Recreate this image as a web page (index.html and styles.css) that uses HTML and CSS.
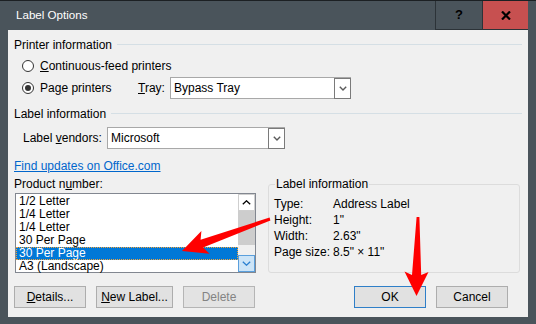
FILE: index.html
```html
<!DOCTYPE html>
<html>
<head>
<meta charset="utf-8">
<link rel="stylesheet" href="styles.css">
</head>
<body>
<div class="window">
  <div class="titlebar">
    <span class="title">Label Options</span>
    <div class="tb-btn help">?</div>
    <div class="tb-btn close">
      <svg width="10" height="9" viewBox="0 0 10 9"><path d="M1 0.5 L9 8.5 M9 0.5 L1 8.5" stroke="#000" stroke-width="2.2" fill="none"/></svg>
    </div>
  </div>
  <div class="client">
    <div class="section-head"><span>Printer information</span><i class="rule"></i></div>
    <div class="radio-row first">
      <span class="radio"></span><span><u>C</u>ontinuous-feed printers</span>
    </div>
    <div class="radio-row second">
      <span class="radio checked"></span><span class="pp">Pa<u>g</u>e printers</span>
      <span class="tray-label"><u>T</u>ray:</span>
      <div class="combo tray"><span class="combo-text">Bypass Tray</span>
        <span class="dd"><svg width="8" height="5" viewBox="0 0 8 5"><path d="M0.8 0.8 L4 4 L7.2 0.8" stroke="#5a5a5a" stroke-width="1.4" fill="none"/></svg></span>
      </div>
    </div>
    <div class="section-head second"><span>Label information</span><i class="rule"></i></div>
    <div class="vendor-row">
      <span class="vendor-label">Label <u>v</u>endors:</span>
      <div class="combo vendor"><span class="combo-text">Microsoft</span>
        <span class="dd"><svg width="8" height="5" viewBox="0 0 8 5"><path d="M0.8 0.8 L4 4 L7.2 0.8" stroke="#5a5a5a" stroke-width="1.4" fill="none"/></svg></span>
      </div>
    </div>
    <a class="link">Find updates on Office.com</a>
    <div class="product-area">
      <div class="left-col">
        <div class="plabel">Product n<u>u</u>mber:</div>
        <div class="listbox">
          <div class="items">
            <div class="item">1/2 Letter</div>
            <div class="item">1/4 Letter</div>
            <div class="item">1/4 Letter</div>
            <div class="item">30 Per Page</div>
            <div class="item sel">30 Per Page</div>
            <div class="item">A3 (Landscape)</div>
          </div>
          <div class="scrollbar">
            <div class="sb-btn sb-up"><svg width="9" height="5" viewBox="0 0 9 5"><path d="M0.8 4.2 L4.5 0.8 L8.2 4.2" stroke="#000" stroke-width="1.3" fill="none"/></svg></div>
            <div class="sb-thumb"></div>
            <div class="sb-track"></div>
            <div class="sb-btn sb-down"><svg width="9" height="5" viewBox="0 0 9 5"><path d="M0.8 0.8 L4.5 4.2 L8.2 0.8" stroke="#2a7fd0" stroke-width="1.3" fill="none"/></svg></div>
          </div>
        </div>
      </div>
      <fieldset class="group">
        <legend>Label information</legend>
        <div class="info">
          <span>Type:</span><span>Address Label</span>
          <span>Height:</span><span>1"</span>
          <span>Width:</span><span>2.63"</span>
          <span>Page size:</span><span>8.5" × 11"</span>
        </div>
      </fieldset>
    </div>
    <div class="buttons">
      <div class="btn w72"><span><u>D</u>etails...</span></div>
      <div class="btn w77"><span><u>N</u>ew Label...</span></div>
      <div class="btn w72 disabled"><span>Delete</span></div>
      <div class="btn w72 default push"><span>OK</span></div>
      <div class="btn w72"><span>Cancel</span></div>
    </div>
  </div>
  <svg class="arrows" width="536" height="324" viewBox="0 0 536 324">
    <polygon fill="#ff0000" points="182,250 201.4,230.1 200.6,238.8 269.6,216.6 270.4,219.4 203.1,246.6 209.6,252.7"/>
    <polygon fill="#ff0000" points="416.5,295 404.5,270.5 412,274 416.6,216 419.4,216 421.2,274 428.5,271"/>
  </svg>
</div>
</body>
</html>
```

FILE: styles.css
```css
* { box-sizing: border-box; }
html, body { margin: 0; padding: 0; }
body {
  font-family: "Liberation Sans", Arial, sans-serif;
  font-size: 12px;
  line-height: 16px;
  color: #000;
  background: #4a545b;
}
.window {
  position: relative;
  width: 536px;
  height: 324px;
  background: #4a545b;
  border-top: 1px solid #1c2023;
  display: flex;
  flex-direction: column;
  overflow: hidden;
}
.titlebar {
  height: 29px;
  display: flex;
  align-items: stretch;
  padding-right: 8px;
}
.title {
  flex: 1;
  color: #fff;
  padding-left: 16px;
  font-size: 11.6px;
  line-height: 28px;
}
.tb-btn {
  display: flex;
  align-items: center;
  justify-content: center;
}
.help {
  width: 47px;
  border-left: 1px solid #2c3338;
  border-bottom: 1px solid #2c3338;
  font-weight: bold;
  font-size: 13px;
  color: #000;
}
.close {
  width: 46px;
  background: #c75050;
  border-left: 1px solid #2c3338;
  border-bottom: 1px solid #2c3338;
}
.client {
  flex: 1;
  margin: 0 8px 7px 8px;
  background: #f0f0f0;
  display: flex;
  flex-direction: column;
}
.section-head {
  margin-top: 7px;
  height: 16px;
  display: flex;
  align-items: center;
  padding: 0 6px;
}
.rule {
  flex: 1;
  height: 1px;
  background: #d5dfe5;
  margin-left: 5px;
  margin-top: -1px;
}
.radio-row {
  display: flex;
  align-items: center;
  padding-left: 14px;
}
.radio-row.first { margin-top: 5px; height: 16px; }
.radio-row.second { margin-top: 3px; height: 22px; }
.radio {
  width: 12px;
  height: 12px;
  border: 1px solid #333;
  border-radius: 50%;
  background: #fff;
  margin-right: 6px;
  display: grid;
  place-items: center;
  flex: none;
}
.radio.checked::after {
  content: "";
  width: 6px;
  height: 6px;
  border-radius: 50%;
  background: #333;
}
.pp { width: 98px; flex: none; }
.tray-label { width: 32px; flex: none; }
.combo {
  height: 22px;
  border: 1px solid #a8a8a8;
  background: #fff;
  display: flex;
  align-items: stretch;
  padding-left: 3px;
}
.combo-text { flex: 1; line-height: 20px; }
.dd {
  width: 17px;
  border: 1px solid #7a7a7a;
  background: #fff;
  display: grid;
  place-items: center;
  margin: 0 -1px -1px 0;
}
.tray { width: 181px; }
.vendor { width: 178px; }
.vendor-row {
  margin-top: 5px;
  height: 22px;
  display: flex;
  align-items: center;
  padding-left: 15px;
}
.vendor-label { width: 84px; flex: none; }
.link {
  margin-top: 9px;
  margin-left: 6px;
  height: 16px;
  align-self: flex-start;
  color: #0066cc;
  text-decoration: underline;
}
.product-area {
  margin-top: 2px;
  height: 97px;
  display: flex;
  padding-left: 6px;
}
.left-col { width: 242px; flex: none; }
.plabel { height: 16px; }
.listbox {
  margin: 1px 0 0 1px;
  width: 241px;
  height: 80px;
  border: 1px solid #828790;
  background: #fff;
  display: flex;
}
.items { flex: 1; padding-top: 1px; min-width: 0; }
.item {
  height: 13px;
  line-height: 13px;
  padding-left: 3px;
  white-space: nowrap;
}
.item.sel {
  background: #0078d7;
  color: #fff;
  outline: 1px dotted #f2a33a;
  outline-offset: -1px;
}
.scrollbar {
  width: 17px;
  flex: none;
  display: flex;
  flex-direction: column;
  background: #f0f0f0;
}
.sb-btn {
  height: 17px;
  display: grid;
  place-items: center;
  flex: none;
}
.sb-up { background: #fff; border: 1px solid #cfcfcf; }
.sb-thumb { height: 34px; background: #cdcdcd; flex: none; }
.sb-track { flex: 1; }
.sb-down { background: #cce4f7; border: 1px solid #5a9fdc; }
.group {
  margin: 0 0 0 12px;
  padding: 0 0 0 5px;
  width: 252px;
  height: 97px;
  border: 1px solid #dcdcdc;
  border-radius: 3px;
  min-width: 0;
}
.group legend {
  padding: 0 1px;
  margin-left: 1px;
  line-height: 16px;
}
.info {
  display: grid;
  grid-template-columns: 59px auto;
  grid-auto-rows: 16px;
  padding-top: 4px;
}
.buttons {
  margin-top: 13px;
  height: 22px;
  display: flex;
  gap: 10px;
  padding: 0 20px 0 6px;
}
.btn {
  height: 22px;
  border: 1px solid #adadad;
  background: #e1e1e1;
  display: flex;
  align-items: center;
  justify-content: center;
}
.w72 { width: 72px; }
.w77 { width: 77px; }
.btn.disabled { color: #838383; border-color: #b5b5b5; background: #e3e3e3; }
.btn.default { border-color: #2f7fc8; }
.push { margin-left: auto; }
.arrows {
  position: absolute;
  left: 0;
  top: 0;
  pointer-events: none;
}
```
